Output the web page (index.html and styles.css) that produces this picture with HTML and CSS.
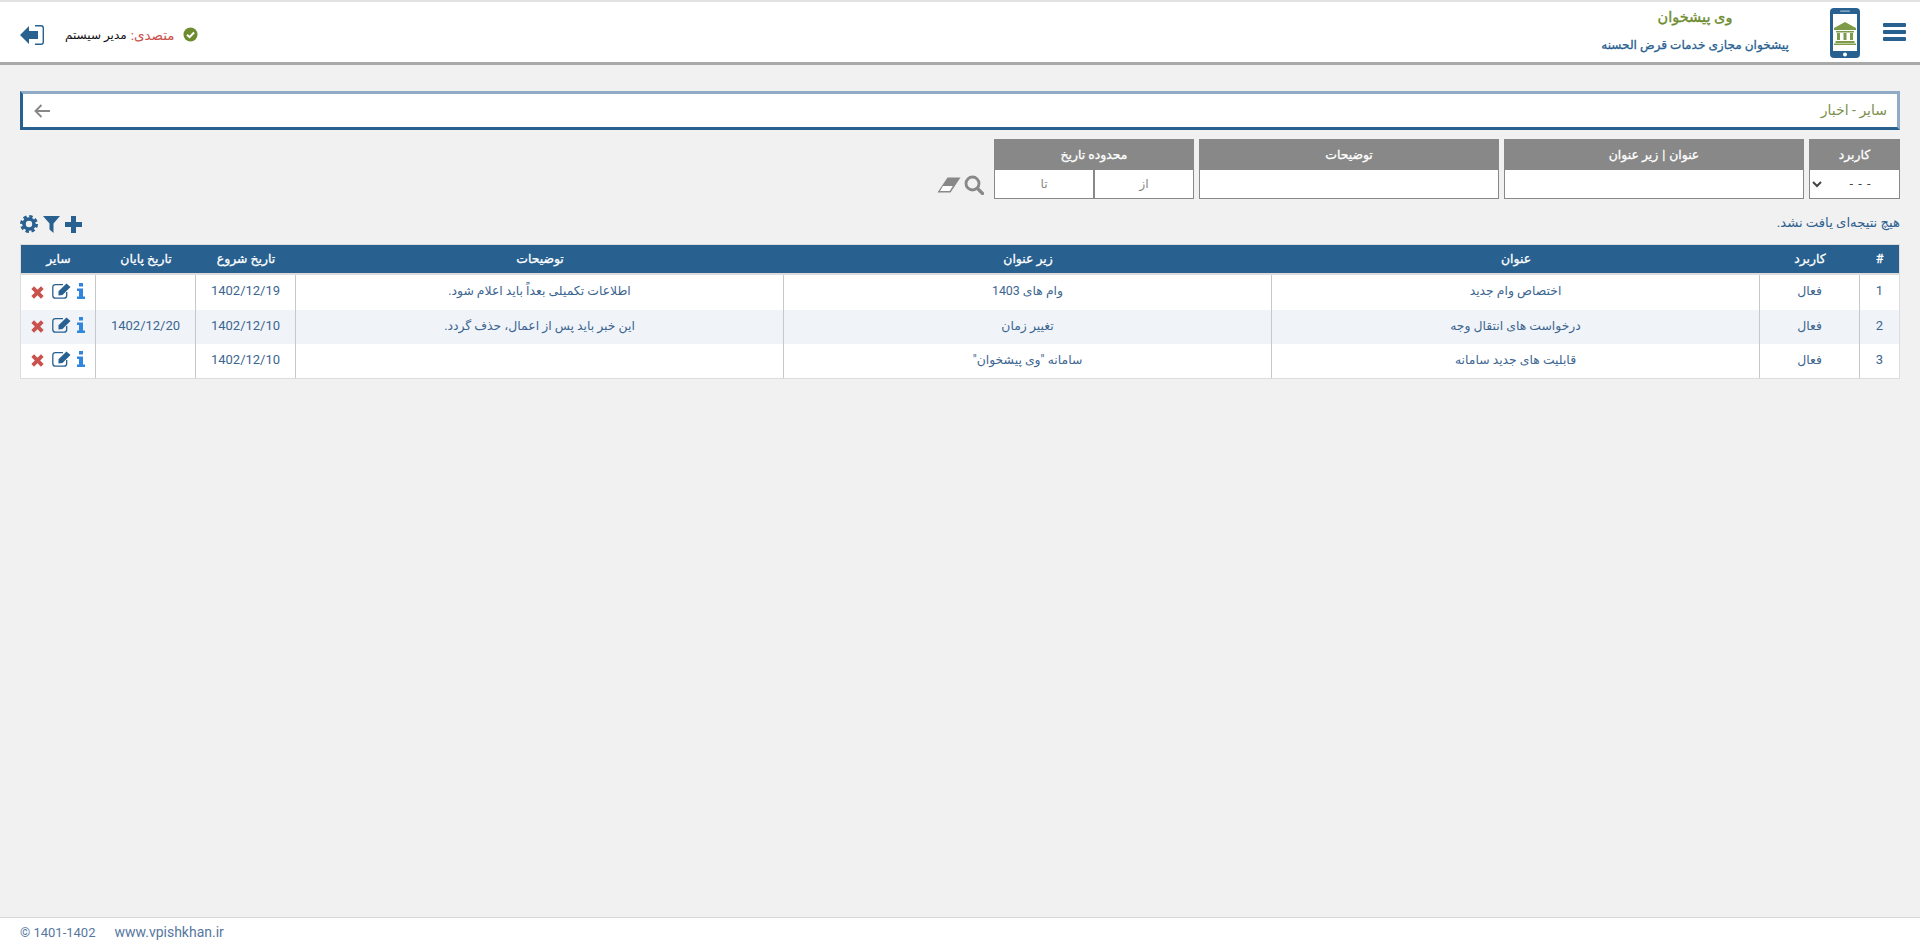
FILE: index.html
```html
<!DOCTYPE html>
<html lang="fa" dir="rtl">
<head>
<meta charset="utf-8">
<title>وی پیشخوان</title>
<link rel="stylesheet" href="styles.css">
</head>
<body>
<header class="topbar">
  <button class="burger" aria-label="منو"><span></span><span></span><span></span></button>
  <svg class="phone" viewBox="0 0 30 50" aria-hidden="true">
    <rect width="30" height="50" rx="4" fill="#286090"/>
    <rect x="3" y="6" width="24" height="37" fill="#fff"/>
    <rect x="10" y="2.500" width="10" height="1.200" rx=".6" fill="#9fb9d2"/>
    <circle cx="15" cy="46.500" r="2" fill="#fff"/>
    <path d="M15 14 L26 20 V22 H4 V20 Z M6 23 H24 V24.500 H6 Z M7 25 H10 V32 H7 Z M13.500 25 H16.500 V32 H13.500 Z M20 25 H23 V32 H20 Z M5.500 33 H24.500 V35 H5.500 Z M4 35.500 H26 V37 H4 Z" fill="#7e9b4a"/>
  </svg>
  <div class="brand">
    <div class="brand-title">وی پیشخوان</div>
    <div class="brand-sub">پیشخوان مجازی خدمات قرض الحسنه</div>
  </div>
  <div class="user">
    <svg class="check" viewBox="0 0 16 16" aria-hidden="true">
      <circle cx="8" cy="8" r="7.500" fill="#6d8c2e"/>
      <path d="M4.300 8.200 L7 10.800 L11.800 5.800" fill="none" stroke="#fff" stroke-width="2.200"/>
    </svg>
    <span class="user-label">متصدی:</span>
    <span class="user-name">مدیر سیستم</span>
    <svg class="logout" viewBox="0 0 24 20" aria-hidden="true">
      <path d="M0 10 L9 1 V6 H18 V14 H9 V19 Z" fill="#286090"/>
      <path d="M15 .7 H21 Q23.300 .7 23.300 3 V17 Q23.300 19.300 21 19.300 H15" fill="none" stroke="#286090" stroke-width="1.400"/>
    </svg>
  </div>
</header>

<main class="content">
  <div class="crumb">
    <span class="crumb-text">سایر - اخبار</span>
    <svg class="crumb-back" viewBox="0 0 16 14" aria-hidden="true">
      <path d="M16 7 H1.500 M7.500 1 L1.500 7 L7.500 13" fill="none" stroke="#888" stroke-width="1.900"/>
    </svg>
  </div>

  <form class="filters">
    <div class="filter f-status">
      <div class="filter-head">کاربرد</div>
      <select class="filter-select"><option>- - -</option></select>
    </div>
    <div class="filter f-wide">
      <div class="filter-head">عنوان <span class="sep">|</span> زیر عنوان</div>
      <input class="filter-input" type="text">
    </div>
    <div class="filter f-wide">
      <div class="filter-head">توضیحات</div>
      <input class="filter-input" type="text">
    </div>
    <div class="filter f-date">
      <div class="filter-head">محدوده تاریخ</div>
      <div class="date-pair">
        <input class="filter-input date-input" type="text" placeholder="از">
        <input class="filter-input date-input" type="text" placeholder="تا">
      </div>
    </div>
    <div class="filter-actions">
      <svg class="i-search" viewBox="0 0 20 20" aria-hidden="true">
        <circle cx="8.500" cy="8.500" r="6.500" fill="none" stroke="#888" stroke-width="2.800"/>
        <path d="M13.500 13.500 L18.500 18.500" stroke="#888" stroke-width="3.200" stroke-linecap="round"/>
      </svg>
      <svg class="i-eraser" viewBox="0 0 24 16" aria-hidden="true">
        <path d="M10.500 .5 H23.500 L13.500 15.500 H.5 Z" fill="#888"/>
        <path d="M6 9 H15.800 L12.700 13.900 H3 Z" fill="#fff"/>
      </svg>
    </div>
  </form>

  <div class="toolbar">
    <span class="no-result">هیچ نتیجه‌ای یافت نشد.</span>
    <div class="tools">
      <svg class="tool-plus" viewBox="0 0 17 17" aria-hidden="true"><path d="M6 0 H11 V6 H17 V11 H11 V17 H6 V11 H0 V6 H6 Z" fill="#286090"/></svg>
      <svg class="tool-filter" viewBox="0 0 17 17" aria-hidden="true"><path d="M0 0 H17 L10.500 7.500 V17 L6.500 13.500 V7.500 Z" fill="#286090"/></svg>
      <svg class="tool-gear" viewBox="0 0 18 18" aria-hidden="true">
        <circle cx="9" cy="9" r="5" fill="none" stroke="#286090" stroke-width="3.600"/>
        <circle cx="9" cy="9" r="7.600" fill="none" stroke="#286090" stroke-width="2.800" stroke-dasharray="3.400 2.570"/>
      </svg>
    </div>
  </div>

  <table class="grid">
    <colgroup>
      <col class="c-num"><col class="c-date"><col class="c-text"><col class="c-text"><col class="c-text"><col class="c-date"><col class="c-date"><col class="c-act">
    </colgroup>
    <thead>
      <tr><th>#</th><th>کاربرد</th><th>عنوان</th><th>زیر عنوان</th><th>توضیحات</th><th>تاریخ شروع</th><th>تاریخ پایان</th><th>سایر</th></tr>
    </thead>
    <tbody>
      <tr>
        <td class="num">1</td><td>فعال</td><td>اختصاص وام جدید</td><td>وام های 1403</td><td>اطلاعات تکمیلی بعداً باید اعلام شود.</td><td class="num">1402/12/19</td><td class="num"></td>
        <td class="acts">
          <svg class="a-info" viewBox="0 0 8 16" aria-hidden="true"><path d="M2 0 H6 V3.500 H2 Z M0 5.500 H6 V13.500 H8 V16 H0 V13.500 H2 V8 H0 Z" fill="#3085dc"/></svg>
          <svg class="a-edit" viewBox="0 0 20 16" aria-hidden="true"><path d="M11 1.700 H3.500 Q.8 1.700 .8 4.400 V12.500 Q.8 15.200 3.500 15.200 H12 Q14.700 15.200 14.700 12.500 V9" fill="none" stroke="#286090" stroke-width="1.300"/><path d="M6.500 8.300 L14.500 .5 L18.500 4 L10.500 12 L6.500 12.500 Z" fill="#286090"/></svg>
          <svg class="a-del" viewBox="0 0 13 13" aria-hidden="true"><path d="M1.700 1.700 L11.300 11.300 M11.300 1.700 L1.700 11.300" stroke="#c9524e" stroke-width="3.800"/></svg>
        </td>
      </tr>
      <tr>
        <td class="num">2</td><td>فعال</td><td>درخواست های انتقال وجه</td><td>تغییر زمان</td><td>این خبر باید پس از اعمال، حذف گردد.</td><td class="num">1402/12/10</td><td class="num">1402/12/20</td>
        <td class="acts">
          <svg class="a-info" viewBox="0 0 8 16" aria-hidden="true"><path d="M2 0 H6 V3.500 H2 Z M0 5.500 H6 V13.500 H8 V16 H0 V13.500 H2 V8 H0 Z" fill="#3085dc"/></svg>
          <svg class="a-edit" viewBox="0 0 20 16" aria-hidden="true"><path d="M11 1.700 H3.500 Q.8 1.700 .8 4.400 V12.500 Q.8 15.200 3.500 15.200 H12 Q14.700 15.200 14.700 12.500 V9" fill="none" stroke="#286090" stroke-width="1.300"/><path d="M6.500 8.300 L14.500 .5 L18.500 4 L10.500 12 L6.500 12.500 Z" fill="#286090"/></svg>
          <svg class="a-del" viewBox="0 0 13 13" aria-hidden="true"><path d="M1.700 1.700 L11.300 11.300 M11.300 1.700 L1.700 11.300" stroke="#c9524e" stroke-width="3.800"/></svg>
        </td>
      </tr>
      <tr>
        <td class="num">3</td><td>فعال</td><td>قابلیت های جدید سامانه</td><td>سامانه "وی پیشخوان"</td><td></td><td class="num">1402/12/10</td><td class="num"></td>
        <td class="acts">
          <svg class="a-info" viewBox="0 0 8 16" aria-hidden="true"><path d="M2 0 H6 V3.500 H2 Z M0 5.500 H6 V13.500 H8 V16 H0 V13.500 H2 V8 H0 Z" fill="#3085dc"/></svg>
          <svg class="a-edit" viewBox="0 0 20 16" aria-hidden="true"><path d="M11 1.700 H3.500 Q.8 1.700 .8 4.400 V12.500 Q.8 15.200 3.500 15.200 H12 Q14.700 15.200 14.700 12.500 V9" fill="none" stroke="#286090" stroke-width="1.300"/><path d="M6.500 8.300 L14.500 .5 L18.500 4 L10.500 12 L6.500 12.500 Z" fill="#286090"/></svg>
          <svg class="a-del" viewBox="0 0 13 13" aria-hidden="true"><path d="M1.700 1.700 L11.300 11.300 M11.300 1.700 L1.700 11.300" stroke="#c9524e" stroke-width="3.800"/></svg>
        </td>
      </tr>
    </tbody>
  </table>
</main>

<footer class="footer" dir="ltr">
  <span class="copy">© 1401-1402</span>
  <span class="site">www.vpishkhan.ir</span>
</footer>
</body>
</html>
```

FILE: styles.css
```css
* { box-sizing: border-box; }
html, body { height: 100%; }
body {
  margin: 0;
  display: flex;
  flex-direction: column;
  background: #f1f1f1;
  color: #2d5f8f;
  font-family: Roboto, "DejaVu Sans", sans-serif;
  font-size: 12px;
  overflow: hidden;
}

/* top bar */
.topbar {
  height: 65px;
  flex: none;
  display: flex;
  align-items: center;
  background: #fff;
  border-top: 2px solid #e2e2e2;
  border-bottom: 3px solid #a9a9a9;
  padding-right: 14px;
  padding-left: 20px;
}
.burger {
  width: 23px;
  height: 18px;
  padding: 0;
  border: 0;
  background: none;
  display: flex;
  flex-direction: column;
  justify-content: space-between;
  margin-left: 23px;
}
.burger span { display: block; height: 4px; background: #286090; border-radius: 1px; }
.phone { width: 30px; height: 50px; margin-left: 41px; margin-top: 2px; }
.brand { width: 188px; text-align: center; margin-bottom: 2px; }
.brand-title {
  font-size: 14.500px;
  -webkit-text-stroke: .35px #6d8c2e;
  color: #6d8c2e;
  line-height: 20px;
  margin-bottom: 8px;
}
.brand-sub {
  font-size: 12.100px;
  -webkit-text-stroke: .3px #286090;
  color: #286090;
  line-height: 18px;
  white-space: nowrap;
}
.user { margin-right: auto; display: flex; align-items: center; padding-top: 5px; }
.check { width: 15px; height: 15px; margin-left: 8px; }
.user-label { color: #c9524e; font-size: 13.500px; margin-left: 4px; }
.user-name { color: #111; font-size: 12px; margin-left: 21px; }
.logout { width: 24px; height: 20px; }

/* content */
.content { flex: 1; min-height: 0; padding: 26px 20px 0; }
.crumb {
  height: 39px;
  display: flex;
  align-items: center;
  justify-content: space-between;
  background: #fff;
  border: 3px solid #90abc6;
  border-left-color: #286090;
  border-bottom-color: #286090;
  padding: 0 10px 0 11px;
}
.crumb-text { color: #7d8f4c; font-size: 14px; padding-bottom: 2px; }
.crumb-back { width: 16px; height: 14px; }

/* filters */
.filters { display: flex; align-items: flex-end; gap: 5px; margin-top: 9px; }
.filter { display: flex; flex-direction: column; height: 60px; }
.f-status { width: 91px; }
.f-wide { width: 300px; }
.f-date { width: 200px; }
.filter-head {
  height: 31px;
  flex: none;
  background: #888;
  color: #fff;
  font-size: 12.400px;
  -webkit-text-stroke: .3px #fff;
  display: flex;
  align-items: center;
  justify-content: center;
  gap: 4px;
}
.sep { color: #fff8e0; }
.filter-input, .filter-select {
  flex: 1;
  min-height: 0;
  width: 100%;
  border: 1px solid #888;
  border-top: 0;
  background: #fff;
  font-family: inherit;
  font-size: 12.400px;
  text-align: center;
  color: #333;
  border-radius: 0;
  padding: 0 0 2px;
  outline: 0;
}
.filter-select { text-align-last: center; color: #444; font-size: 13px; letter-spacing: 1px; }
.date-pair { display: flex; flex: 1; min-height: 0; }
.date-input { width: 50%; }
.date-input + .date-input { border-right: 0; }
.date-input:first-child { border-left-width: 2px; }
.date-input::placeholder { color: #888; }
.filter-actions { display: flex; align-items: center; gap: 3px; height: 29px; margin-right: 5px; }
.i-search { width: 20px; height: 20px; }
.i-eraser { width: 24px; height: 16px; }

/* toolbar */
.toolbar { display: flex; align-items: center; justify-content: space-between; margin-top: 15px; height: 20px; }
.no-result { font-size: 13.200px; color: #2d5f8f; padding-bottom: 3px; }
.tools { display: flex; align-items: center; gap: 5px; }
.tool-plus, .tool-filter { width: 17px; height: 17px; }
.tool-gear { width: 18px; height: 18px; }

/* table */
.grid {
  width: 100%;
  table-layout: fixed;
  border-collapse: separate;
  border-spacing: 0;
  margin-top: 10px;
  background: #fff;
  border: 1px solid #dcdcdc;
  font-size: 12.400px;
}
.c-num { width: 39px; }
.c-date { width: 100px; }
.c-text { width: 488px; }
.c-act { width: 75px; }
.grid th {
  height: 30px;
  background: #286090;
  color: #fff;
  font-weight: 400;
  font-size: 12.400px;
  -webkit-text-stroke: .3px #fff;
  padding: 0 0 2px;
  border-bottom: 2px solid #dcdcdc;
}
.grid td {
  height: 34px;
  text-align: center;
  padding: 0 0 4px;
  border-right: 1px solid #c8c8c8;
  color: #3c6590;
}
.grid tbody tr:first-child td { height: 35px; }
.grid td:first-child { border-right: 0; }
.grid tbody tr:nth-child(2) { background: #f0f4f9; }
.grid .num { font-size: 13px; }
.grid .acts { white-space: nowrap; font-size: 0; padding-left: 0; }
.acts svg { vertical-align: middle; }
.a-info { width: 8px; height: 16px; margin-left: 5px; }
.a-edit { width: 20px; height: 16px; margin-left: 8px; }
.a-del { width: 13px; height: 13px; margin-top: 3px; }

/* footer */
.footer {
  height: 29px;
  flex: none;
  display: flex;
  align-items: center;
  gap: 19px;
  padding-left: 20px;
  background: #fff;
  border-top: 1px solid #d8d8d8;
  color: #56779f;
}
.copy { font-size: 13px; }
.site { font-size: 14px; }
```
